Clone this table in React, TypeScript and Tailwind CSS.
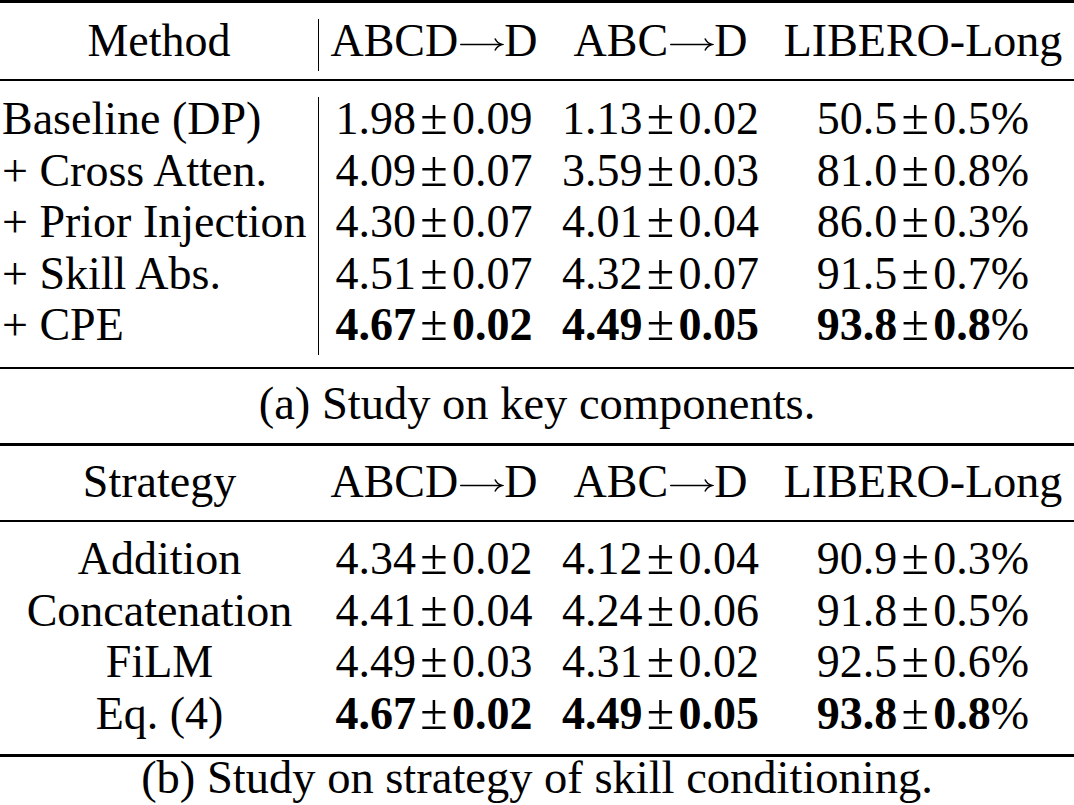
import React from "react";

const rowsA: [string, string, string, string, boolean][] = [
  ["Baseline (DP)", "1.98|0.09", "1.13|0.02", "50.5|0.5", false],
  ["+ Cross Atten.", "4.09|0.07", "3.59|0.03", "81.0|0.8", false],
  ["+ Prior Injection", "4.30|0.07", "4.01|0.04", "86.0|0.3", false],
  ["+ Skill Abs.", "4.51|0.07", "4.32|0.07", "91.5|0.7", false],
  ["+ CPE", "4.67|0.02", "4.49|0.05", "93.8|0.8", true],
];

const rowsB: [string, string, string, string, boolean][] = [
  ["Addition", "4.34|0.02", "4.12|0.04", "90.9|0.3", false],
  ["Concatenation", "4.41|0.04", "4.24|0.06", "91.8|0.5", false],
  ["FiLM", "4.49|0.03", "4.31|0.02", "92.5|0.6", false],
  ["Eq. (4)", "4.67|0.02", "4.49|0.05", "93.8|0.8", true],
];

function Arrow() {
  return (
    <svg
      className="inline-block w-[1em] h-[0.5em] align-baseline"
      viewBox="0 0 100 50"
      fill="none"
      stroke="currentColor"
      strokeWidth="3.4"
      strokeLinecap="round"
    >
      <path d="M6 25 H93" />
      <path d="M81 13 Q85 22 96 25 Q85 28 81 37" />
    </svg>
  );
}

function PM({ v, bold, pct }: { v: string; bold: boolean; pct?: boolean }) {
  const [a, b] = v.split("|");
  return (
    <span className="whitespace-nowrap">
      <span className={bold ? "font-bold" : ""}>{a}</span>
      <span className="inline-block w-[36px] text-center text-[50px] leading-[30px] font-normal">±</span>
      <span className={bold ? "font-bold" : ""}>{b}</span>
      {pct ? <span>%</span> : null}
    </span>
  );
}

const COLS = "grid grid-cols-[319px_230px_223px_302px] leading-[43px]";

function Header({ first, bar }: { first: string; bar: boolean }) {
  return (
    <div className={`${COLS} h-[52px]`}>
      <div className={bar ? "border-r-[1.5px] border-black text-center" : "text-center"}>{first}</div>
      <div className="text-center whitespace-nowrap">
        ABCD<Arrow />D
      </div>
      <div className="text-center whitespace-nowrap">
        ABC<Arrow />D
      </div>
      <div className="text-center whitespace-nowrap">LIBERO-Long</div>
    </div>
  );
}

export default function App() {
  return (
    <div className="w-[1074px] h-[805px] overflow-hidden bg-white text-black [font-family:'Liberation_Serif','Times_New_Roman',serif] text-[46px] leading-[41px]">
      {/* Table (a) */}
      <div className="h-[3.3px] bg-black" />
      <div className="mt-[15.7px]">
        <Header first="Method" bar />
      </div>
      <div className="mt-[8px] h-[2px] bg-black" />
      <div className="mt-[16px]">
        {rowsA.map((r) => (
          <div key={r[0]} className={`${COLS} h-[51.6px]`}>
            <div className="border-r-[1.5px] border-black pl-[2px] whitespace-nowrap">{r[0]}</div>
            <div className="text-center"><PM v={r[1]} bold={r[4]} /></div>
            <div className="text-center"><PM v={r[2]} bold={r[4]} /></div>
            <div className="text-center"><PM v={r[3]} bold={r[4]} pct /></div>
          </div>
        ))}
      </div>
      <div className="mt-[12px] h-[2px] bg-black" />
      <div className="mt-[14px] h-[41px] text-center whitespace-nowrap text-[46.5px]">(a) Study on key components.</div>

      {/* Table (b) */}
      <div className="mt-[19px] h-[3px] bg-black" />
      <div className="mt-[14px]">
        <Header first="Strategy" bar={false} />
      </div>
      <div className="mt-[8px] h-[2px] bg-black" />
      <div className="mt-[15.5px]">
        {rowsB.map((r) => (
          <div key={r[0]} className={`${COLS} h-[51.5px]`}>
            <div className="text-center whitespace-nowrap">{r[0]}</div>
            <div className="text-center"><PM v={r[1]} bold={r[4]} /></div>
            <div className="text-center"><PM v={r[2]} bold={r[4]} /></div>
            <div className="text-center"><PM v={r[3]} bold={r[4]} pct /></div>
          </div>
        ))}
      </div>
      <div className="mt-[11px] h-[3px] bg-black" />
      <div className="mt-[6px] h-[30px] leading-[30px] text-center whitespace-nowrap text-[46.5px]">
        (b) Study on strategy of skill conditioning.
      </div>
    </div>
  );
}
